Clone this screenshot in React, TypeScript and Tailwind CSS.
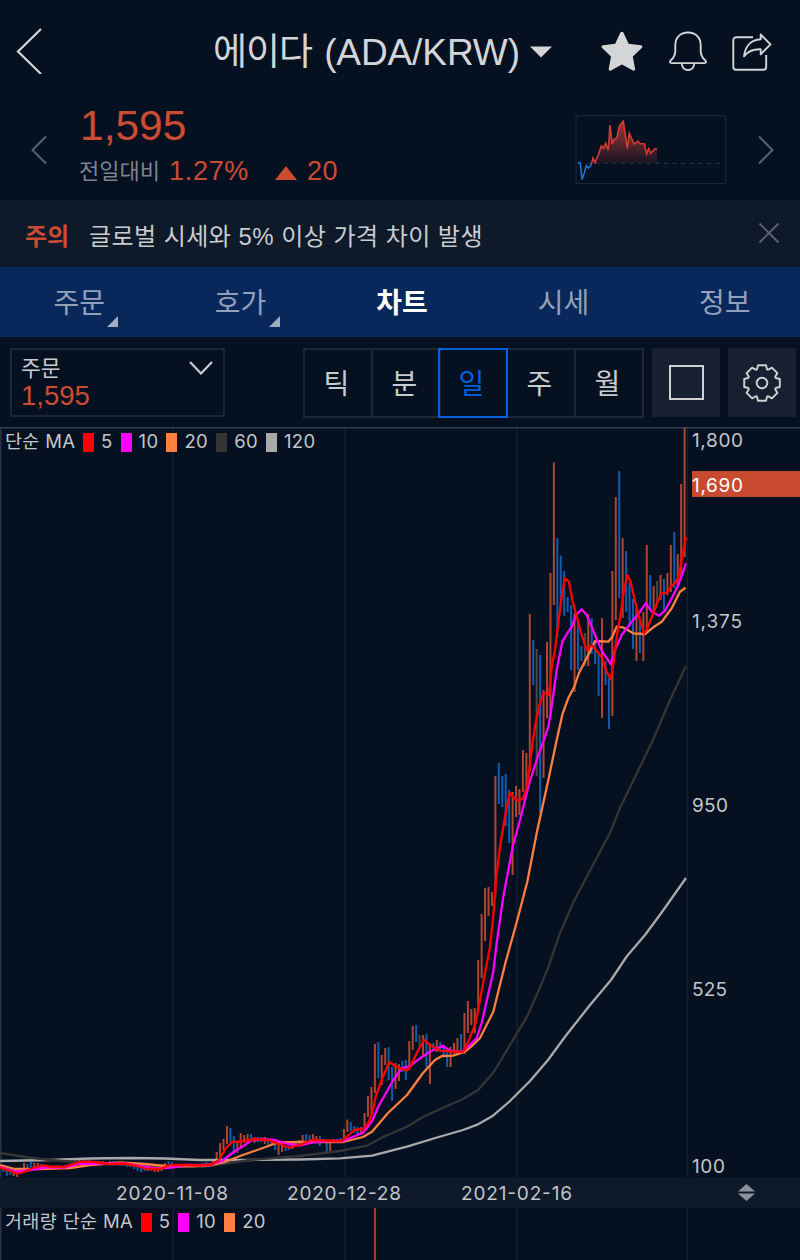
import { clsx } from 'clsx';

type Candle = [high: number, low: number, kind: 'u' | 'd' | 'n'];

const STEP = 3.44;

const candleColor = {
  u: '#b04630',
  d: '#125bb0',
  n: '#484a44',
} as const;

const candleRuns: { start: number; candles: Candle[] }[] = [
  {
    start: 3.4,
    candles: [
      [1165, 1172, 'd'], [1168, 1176, 'd'], [1171, 1175, 'd'], [1171, 1176, 'u'], [1171, 1177, 'u'],
      [1168, 1174, 'u'], [1163, 1170, 'u'], [1164, 1168, 'd'], [1162, 1167, 'd'], [1163, 1167, 'u'],
      [1163, 1168, 'u'], [1164, 1169, 'd'], [1165, 1169, 'd'], [1165, 1169, 'd'], [1166, 1169, 'u'],
      [1166, 1169, 'u'], [1165, 1169, 'd'], [1166, 1169, 'u'], [1165, 1169, 'u'], [1164, 1168, 'u'],
      [1161, 1167, 'u'], [1160, 1166, 'u'], [1159, 1164, 'u'], [1159, 1164, 'd'], [1160, 1163, 'd'],
      [1160, 1163, 'd'], [1161, 1164, 'u'], [1161, 1164, 'd'], [1161, 1164, 'u'], [1161, 1165, 'u'],
      [1162, 1165, 'd'], [1161, 1164, 'u'], [1161, 1164, 'd'], [1162, 1164, 'u'], [1162, 1165, 'd'],
      [1162, 1165, 'd'], [1163, 1167, 'd'], [1163, 1167, 'd'], [1165, 1169, 'd'], [1166, 1171, 'd'],
      [1167, 1172, 'd'], [1167, 1171, 'd'], [1168, 1171, 'u'], [1168, 1171, 'd'], [1168, 1172, 'u'],
      [1168, 1172, 'u'], [1168, 1171, 'u'], [1163, 1168, 'u'], [1161, 1167, 'd'], [1162, 1168, 'd'],
      [1164, 1167, 'd'], [1164, 1168, 'u'], [1164, 1166, 'u'], [1164, 1167, 'd'], [1164, 1166, 'u'],
      [1164, 1167, 'd'], [1164, 1167, 'u'], [1164, 1168, 'd'], [1163, 1168, 'u'], [1162, 1166, 'd'],
      [1163, 1166, 'u'],
    ],
  },
  {
    start: 213.2,
    candles: [
      [1159, 1163, 'u'], [1152, 1162, 'u'], [1143, 1160, 'u'], [1139, 1150, 'u'], [1126, 1144, 'u'],
      [1128, 1142, 'd'], [1136, 1154, 'd'], [1142, 1153, 'u'], [1133, 1147, 'u'], [1135, 1143, 'u'],
      [1134, 1142, 'u'], [1134, 1141, 'd'], [1137, 1143, 'u'], [1137, 1142, 'd'], [1137, 1142, 'd'],
      [1137, 1144, 'u'], [1139, 1145, 'd'], [1139, 1145, 'u'], [1140, 1150, 'd'], [1143, 1155, 'u'],
      [1146, 1152, 'u'], [1147, 1151, 'd'], [1146, 1150, 'd'], [1143, 1149, 'u'], [1142, 1147, 'd'],
      [1140, 1145, 'u'], [1135, 1145, 'u'], [1134, 1140, 'd'], [1135, 1140, 'd'], [1134, 1139, 'u'],
      [1136, 1140, 'u'], [1136, 1146, 'd'], [1139, 1143, 'u'], [1140, 1152, 'd'], [1141, 1151, 'u'],
      [1139, 1143, 'u'], [1139, 1143, 'd'], [1138, 1143, 'd'], [1129, 1142, 'u'], [1119.5, 1132, 'u'],
      [1122, 1131, 'd'], [1126, 1133, 'd'], [1127, 1134, 'd'], [1127, 1135, 'u'], [1113, 1127, 'u'],
      [1096, 1117, 'u'], [1087, 1114, 'u'], [1044, 1093, 'u'], [1042, 1078, 'd'], [1055, 1085, 'u'],
      [1048, 1065, 'u'], [1047, 1080, 'd'], [1067, 1101, 'd'], [1063, 1089, 'u'], [1064, 1081, 'u'],
      [1061, 1072, 'd'], [1060, 1080, 'd'], [1041, 1070, 'u'], [1026, 1050, 'u'], [1025, 1042, 'd'],
      [1035, 1047, 'n'], [1035, 1055, 'u'], [1034, 1068, 'd'], [1043, 1084, 'u'], [1043, 1051, 'd'],
      [1040, 1052, 'u'], [1042, 1052, 'd'], [1045, 1057, 'd'], [1050, 1067, 'd'], [1047, 1067, 'u'],
      [1043, 1054, 'u'], [1038, 1053, 'u'],
    ],
  },
  {
    start: 461,
    candles: [
      [1034, 1053, 'd'], [1013, 1054, 'u'], [1001, 1033, 'u'], [1009, 1025, 'u'], [1008, 1033, 'u'],
      [960, 1013, 'u'], [914, 978, 'u'], [888, 941, 'u'], [887, 916, 'u'], [892, 906, 'u'],
      [776, 897, 'u'], [763, 804, 'd'], [776, 807, 'd'], [774, 826, 'd'], [790, 843, 'd'],
      [792, 875, 'u'], [786, 817, 'u'], [789, 815, 'u'], [750, 792, 'u'], [753, 788, 'u'],
      [614, 772, 'u'], [640, 685, 'd'], [649, 776, 'n'], [655, 813, 'd'], [690, 778, 'u'],
      [642, 718, 'u'], [573, 713, 'u'], [462.5, 605, 'u'], [538, 638, 'd'], [555.5, 607, 'd'],
      [571, 616, 'd'], [597, 612, 'd'], [605, 670, 'd'], [613, 692, 'u'], [622.5, 670, 'd'],
      [646, 661, 'd'], [633, 666, 'n'], [614, 666, 'u'], [618, 654, 'd'], [640, 664, 'd'],
      [655, 696, 'd'], [618, 718, 'u'], [661, 685, 'd'], [678, 729, 'd'], [571, 716, 'u'],
      [497, 620, 'u'], [471, 598, 'd'], [538, 618, 'u'], [551, 612, 'd'], [583, 627, 'd'],
      [599, 649, 'd'], [608, 661, 'u'], [617, 653, 'd'], [612, 661, 'u'], [545, 633, 'u'],
      [575, 610, 'd'], [586, 612, 'u'], [581, 602, 'n'], [575, 600, 'u'], [579, 610, 'd'],
      [573, 595, 'u'], [545, 592, 'u'], [532, 588, 'd'], [554, 585, 'u'], [484, 577, 'u'],
      [428, 557, 'u'],
    ],
  },
];

const movingAverages = [
  {
    period: 120,
    color: '#a9a9a9',
    points:
      '0,1161 50,1160 90,1158.5 130,1158 165,1158.5 200,1160 250,1160 300,1159.5 340,1158.3 372,1155.7 407,1146.7 437,1137.5 463,1130 478,1124.3 493,1115.7 510,1101 530,1081 548,1060 565,1036.7 590,1005 611,980 627,956 645,935 662,912 686,878',
  },
  {
    period: 60,
    color: '#353535',
    points:
      '0,1153 25,1157 50,1160 75,1162 100,1164 150,1165.5 200,1167 215,1165 250,1160 300,1156 340,1151 367,1145.7 383,1137 407,1126.7 423,1117 443,1107.7 463,1099 478,1090 493,1073 501,1060 527,1016.7 538,992 548,968 560,933 573,903 592,866.7 610,833 620,808 653,740 670,700 686,666',
  },
  {
    period: 20,
    color: '#ff7f3f',
    points:
      '0,1165 15,1169 40,1169 70,1168 90,1165 120,1162.5 145,1164 170,1166.5 195,1166 212,1165 225,1162 240,1156 260,1149 278,1142.5 300,1142 343,1142 363,1137 372,1131.7 388,1113 407,1095 423,1073 435,1060 442,1056 453,1055.7 465,1051.7 473,1045 480,1038 493.3,1011.7 497,996.7 505.7,961.7 517.3,920 527.3,881.7 536.7,833 548.3,780 556.7,740 562.5,714 568.3,698 574.3,686.7 579,673 586.7,658 595,641 608.3,641.7 612.3,636.7 616.7,626.7 622.7,627.3 633.3,633.3 645,634 653.3,627.3 661.7,621.7 671.7,608.3 680,591.7 685.5,587.7',
  },
  {
    period: 10,
    color: '#ff00ff',
    points:
      '0,1167 10,1170 17,1171.5 30,1170 45,1167.5 65,1167.5 78,1164 95,1163.5 125,1163.5 140,1166 155,1168.5 172,1167.5 185,1165 210,1165 222,1161 235,1151 242,1147 252,1140 262,1139 275,1140 288,1144 300,1145.5 315,1142 330,1141 343,1141 363,1132.7 371.7,1121.7 378.3,1106.7 386.7,1091.7 393.3,1080 401.7,1068.3 410,1066 420,1058.3 430,1051.7 442.7,1045.7 450,1050.7 461.7,1052 470,1045 476.7,1038 481.7,1023 493.3,971.7 496.7,943 503.3,896.7 512.7,846.7 520,820 528.3,786.7 537.7,756.7 543.3,741.7 548.3,727 551.7,706.7 556.7,670 562.3,641.7 568.3,631.7 571.7,627 576,615 581.7,609.3 586.7,615 595,635 602.3,651.7 610.7,664 615,650 621.7,635 631.7,621.7 640,611.7 645.7,603.3 651.7,611.7 659,615.7 665,610.7 671.7,598.3 678.3,585 686,563.3',
  },
  {
    period: 5,
    color: '#ff0000',
    points:
      '0,1167.5 7,1170 17,1173.5 24,1172 34,1167.5 42,1165.5 50,1166.5 64,1167 73,1164 82,1161.5 95,1162 108,1164 125,1163.5 137,1166 147,1169 160,1169 170,1165 185,1165 200,1165.5 212,1164.5 219,1160 226,1148 232,1142 245,1141 255,1139 268,1140 276,1143 289,1147.5 300,1145 311,1140 325,1140.5 335,1141 342,1141 347,1136.7 354.3,1130 363.3,1128.7 368.3,1123 372.3,1113 375.7,1096.7 381.7,1080 389.3,1062 395,1066 400,1068 406.7,1070.7 410,1067 418.3,1050 424.3,1040 430,1045 440,1050.7 453.3,1051.7 463.3,1051.7 469,1040 475.7,1023 480,1000 484.3,976.7 490,946.7 493.3,916.7 496,880 500,846.7 505,816.7 509.7,793 514,798 519,800.7 523.3,798 527.3,785 533,740 535.7,723 539,706.7 543.3,693 549,695 551.7,666.7 555,650 558.3,623 561.7,596.7 565,578.3 569,581.7 572.3,600 577.7,620 581.7,635 586.7,650 591.7,645 596.7,650.7 602.3,658.3 606.7,671.7 610.7,679.3 614,660 616.7,636.7 620.7,613.3 624,590 627.3,575 630.7,581.7 634.3,598.3 640,620 644,633.3 647.3,628.3 653.3,613.3 658.3,600 661.7,593.3 666.7,592.7 671.7,586 676,581.7 679,575 682.3,556.7 686,537',
  },
];

const priceTicks = [
  { label: '1,800', y: 447, width: 51 },
  { label: '1,375', y: 627.5, width: 50 },
  { label: '950', y: 811.5, width: 36 },
  { label: '525', y: 996, width: 35 },
  { label: '100', y: 1173, width: 33 },
];

const dateTicks = [
  { label: '2020-11-08', x: 116, width: 112 },
  { label: '2020-12-28', x: 287, width: 114 },
  { label: '2021-02-16', x: 461, width: 111 },
];

const gridLines = [173, 345, 517, 687.5];

const tabs = [
  { label: '주문', corner: true },
  { label: '호가', corner: true },
  { label: '차트', active: true },
  { label: '시세' },
  { label: '정보' },
];

const intervals = ['틱', '분', '일', '주', '월'];

const priceLegend = [
  { period: '5', color: 'bg-[#ff0000]' },
  { period: '10', color: 'bg-[#ff00ff]' },
  { period: '20', color: 'bg-[#ff7f3f]' },
  { period: '60', color: 'bg-[#353535]' },
  { period: '120', color: 'bg-[#a9a9a9]' },
];

const sparkRed =
  '591.7,163 593,158 595,162.7 598.3,155 601.3,146 603.7,148.3 605.7,143.3 608.3,150 610,125 612.3,144 614.3,139 616.7,138.3 619,127.3 621.3,123.3 623.3,121.3 627.3,148.3 629.3,133.3 634,144 638,141.3 640,143.7 644.3,143.7 646.7,154 648.7,148.7 650.7,153.3 655,148.7 657,148.7';

function Header() {
  return (
    <header className="flex h-[100px] items-center text-[#d3d5d7]">
      <svg className="ml-4 h-12 w-7" viewBox="0 0 28 48" fill="none" stroke="currentColor" strokeWidth="2.2">
        <path d="M25 3 2 25.5 25 48" />
      </svg>
      <h1 className="ml-[169px] flex h-12 w-[309px] items-center whitespace-nowrap pt-[5px] text-[37px]">
        <span className="tracking-[-1px]">에이다</span>
        <span className="ml-[12px] tracking-[-0.1px]">(ADA/KRW)</span>
      </h1>
      <svg className="ml-[8px] mt-[3px] h-3 w-[22px]" viewBox="0 0 22 12" fill="currentColor">
        <path d="M0 .5h22L11 11.5z" />
      </svg>
      <svg className="ml-[49px] mt-[2px] h-10 w-[42px]" viewBox="0 0 42 40" fill="currentColor">
        <path d="M19.4 1.6c.6-1.300 2.400-1.300 3 0l5.200 11.200 12.300 1.500c1.500.2 2 1.700.9 2.700l-9 8.600 2.300 12.300c.3 1.400-1 2.200-2.200 1.500L20.900 33.400 9.900 39.400c-1.200.7-2.500-.1-2.200-1.500L10 25.600 1.100 17c-1.100-1-.5-2.500.9-2.700l12.200-1.500z" />
      </svg>
      <svg className="ml-[25px] mt-[2px] h-[42px] w-10" viewBox="668 30 40 42" fill="none" stroke="currentColor" strokeWidth="1.9" strokeLinejoin="round">
        <path d="M688 32.500c-8 0-12.700 5.300-12.700 12.700v5.300c0 4.200-1.200 7-4.600 10-1.400 1.300-.8 2.600.8 2.600h33c1.600 0 2.200-1.300.8-2.600-3.400-3-4.600-5.800-4.600-10v-5.300c0-7.400-4.700-12.700-12.700-12.700z" />
        <path d="M681.700 63.500c.5 4.200 3 6.500 6.300 6.500s5.800-2.300 6.300-6.500" />
      </svg>
      <svg className="ml-[23px] mt-[2px] h-[42px] w-[42px]" viewBox="731 30 42 42" fill="none" stroke="currentColor" strokeWidth="1.9" strokeLinejoin="round">
        <path d="M753 37.300h-17a2.700 2.700 0 0 0-2.700 2.700v27a2.700 2.700 0 0 0 2.700 2.700h27.500a2.700 2.700 0 0 0 2.700-2.700V55" />
        <path d="M760.700 34.500l9.800 9.800-9.800 10v-5c-7.500-.3-12.500 1.500-16.700 7 1.300-9.800 7-16.600 16.700-17z" />
      </svg>
    </header>
  );
}

function PriceSummary() {
  return (
    <section className="flex h-[100px] items-start">
      <svg className="ml-[31px] mt-[35px] h-[30px] w-4" viewBox="0 0 16 30" fill="none" stroke="#596271" strokeWidth="2">
        <path d="M15 1.5 1.5 15 15 28.5" />
      </svg>
      <div className="ml-[31px] mt-1 w-[497px] text-[#cc4c31]">
        <div className="pl-[2px] text-[42.5px] leading-[44px]">1,595</div>
        <div className="mt-[7px] flex h-8 items-center">
          <span className="w-[91px] whitespace-nowrap pl-px text-[22px] text-[#7c838e]">전일대비</span>
          <span className="text-[27px] tracking-[0.7px]">1.27%</span>
          <svg className="ml-[26px] mt-[3px] h-[14px] w-[22px]" viewBox="0 0 22 14" fill="currentColor">
            <path d="M11 0 22 14H0z" />
          </svg>
          <span className="ml-[10px] text-[27px] tracking-[0.5px]">20</span>
        </div>
      </div>
      <svg className="mt-[15px] h-[69px] w-[151px]" viewBox="575 115 151 69">
        <defs>
          <linearGradient id="spark-fill" x1="0" y1="0" x2="0" y2="1">
            <stop offset="0" stopColor="#a33733" />
            <stop offset="1" stopColor="#a33733" stopOpacity="0.12" />
          </linearGradient>
        </defs>
        <rect x="576" y="115.7" width="149.5" height="67.8" fill="none" stroke="#1b2736" strokeWidth="1.2" />
        <path d="M578 163.3H721" stroke="#253140" strokeWidth="1.3" strokeDasharray="4 4.6" />
        <polygon points={`${sparkRed} 657,163`} fill="url(#spark-fill)" />
        <polyline points="577.7,163 580.3,163 582,179.5 584.3,173 586.3,165.7 588.7,168 590.7,165.7 591.7,163" fill="none" stroke="#1d74cc" strokeWidth="1.6" />
        <polyline points={sparkRed} fill="none" stroke="#d23a32" strokeWidth="1.6" />
      </svg>
      <svg className="ml-8 mt-[35px] h-[30px] w-4" viewBox="0 0 16 30" fill="none" stroke="#596271" strokeWidth="2">
        <path d="M1 1.5 14.5 15 1 28.5" />
      </svg>
    </section>
  );
}

function Notice() {
  return (
    <section className="flex h-[67px] items-center bg-[#0e192a] pb-[2px] text-[24px]">
      <strong className="ml-[25px] w-[64px] pt-[8px] font-bold text-[#cc4c31]">주의</strong>
      <p className="whitespace-nowrap pt-[8px] tracking-[0.46px] text-[#c9ccce]">글로벌 시세와 5% 이상 가격 차이 발생</p>
      <svg className="ml-auto mr-[20px] h-[22px] w-[22px]" viewBox="0 0 22 22" fill="none" stroke="#5c6471" strokeWidth="1.8">
        <path d="m1.5 1.5 19 19M20.5 1.5l-19 19" />
      </svg>
    </section>
  );
}

function Tabs() {
  return (
    <nav className="h-[70px] overflow-hidden bg-[#08275b]">
      <div className="-ml-[2px] grid h-full w-[807px] grid-cols-5">
        {tabs.map((tab) => (
          <div key={tab.label} className="relative flex items-center justify-center pl-px pt-[4px]">
            <span
              className={clsx(
                'text-[28px]',
                tab.active ? 'font-bold text-white' : 'text-[#93a0ba]',
              )}
            >
              {tab.label}
            </span>
            {tab.corner && (
              <svg className="absolute bottom-[10px] right-[41px] h-[11px] w-[11px]" viewBox="0 0 11 11" fill="#a3aec2">
                <path d="M11 0v11H0z" />
              </svg>
            )}
          </div>
        ))}
      </div>
    </nav>
  );
}

function Toolbar() {
  return (
    <section className="flex h-[90px] items-start pl-[10px] pt-[11px] text-[#c9ccce]">
      <div className="flex h-[69px] w-[215px] justify-between border-2 border-[#1c2635] pl-[9px]">
        <div>
          <div className="mt-[6px] text-[21.5px] leading-[26px]">주문</div>
          <div className="text-[27.5px] leading-[27px]">
            <span className="text-[#cc4c31]">1,595</span>
          </div>
        </div>
        <svg className="mr-[10px] mt-[11px] h-[14px] w-6" viewBox="0 0 24 14" fill="none" stroke="currentColor" strokeWidth="2.2">
          <path d="m1 1 11 11.5L23 1" />
        </svg>
      </div>
      <div className="ml-[78px] flex h-[70px] w-[341px] border-2 border-[#1c2635]">
        {intervals.map((name) => (
          <button
            key={name}
            className={clsx(
              'flex flex-1 items-center justify-center pr-[3px] pt-[4px] text-[28px]',
              name === '일'
                ? 'z-10 -my-[2px] -ml-[3px] border-2 border-[#0260dc] text-[#0260dc]'
                : 'border-r-2 border-[#1c2635] last:border-r-0',
            )}
          >
            {name}
          </button>
        ))}
      </div>
      <div className="ml-2 flex h-[69px] w-[68px] items-center justify-center bg-[#162030]">
        <div className="h-[35px] w-[35px] border-2 border-[#cfd1d3]" />
      </div>
      <div className="ml-2 flex h-[69px] w-[68px] items-center justify-center bg-[#162030]">
        <svg className="h-[38px] w-[38px]" viewBox="-19 -19 38 38" fill="none" stroke="#cfd1d3" strokeWidth="1.9" strokeLinejoin="round">
          <path d="M-5-13.700-4-17.800H4L5-13.700 6.200-13.200 9.900-15.400 15.400-9.900 13.200-6.200 13.700-5 17.800-4V4L13.700 5 13.200 6.200 15.400 9.900 9.900 15.400 6.200 13.200 5 13.700 4 17.800H-4L-5 13.700-6.200 13.200-9.900 15.400-15.400 9.900-13.200 6.200-13.700 5-17.800 4V-4L-13.700-5-13.200-6.200-15.400-9.900-9.900-15.400-6.200-13.200z" />
          <circle r="5.300" />
        </svg>
      </div>
    </section>
  );
}

function Legend({ title, items }: { title: string; items: typeof priceLegend }) {
  return (
    <div className="flex h-[26px] items-center whitespace-nowrap pl-[5px] font-['Inter','Noto_Sans_CJK_KR',sans-serif] text-[18.5px] tracking-[0.35px] text-[#c3c6c9]">
      <span className="mr-[7.5px]">{title}</span>
      {items.map((item) => (
        <span key={item.period} className="mr-2 flex items-center">
          <i className={clsx('mr-[7px] h-[19px] w-[11px]', item.color)} />
          {item.period}
        </span>
      ))}
    </div>
  );
}

function PriceChart() {
  return (
    <section className="relative h-[781px]">
      <svg
        className="block h-[781px] w-[800px] font-['Inter','Noto_Sans_CJK_KR',sans-serif]"
        viewBox="0 427 800 781"
        fontSize="19"
      >
        {gridLines.map((x) => (
          <path key={x} d={`M${x} 428V1177`} stroke="#152030" strokeWidth="1.5" />
        ))}
        <path d="M0 427H800" stroke="#344050" strokeWidth="3" />
        <path d="M.8 427V1177" stroke="#2a3544" strokeWidth="1.5" />
        {candleRuns.map((run) =>
          run.candles.map(([high, low, kind], i) => {
            const x = run.start + i * STEP;
            return (
              <line key={x} x1={x} x2={x} y1={high} y2={low} stroke={candleColor[kind]} strokeWidth="2" />
            );
          }),
        )}
        {movingAverages.map((ma) => (
          <polyline key={ma.period} points={ma.points} fill="none" stroke={ma.color} strokeWidth="2.3" strokeLinejoin="round" />
        ))}
        <rect y="1177.5" width="800" height="30.5" fill="#0e192a" />
        {priceTicks.map((tick) => (
          <text key={tick.label} x="692" y={tick.y} textLength={tick.width} fill="#c3c6c9">
            {tick.label}
          </text>
        ))}
        <rect x="692" y="471" width="108" height="26" fill="#c84a2f" />
        <text x="692" y="492" textLength="51" fill="#fff">
          1,690
        </text>
        {dateTicks.map((tick) => (
          <text key={tick.label} x={tick.x} y="1200" textLength={tick.width} fill="#c3c6c9">
            {tick.label}
          </text>
        ))}
        <path d="m746.5 1184 8.5 7.5h-17zM746.5 1201l8.5-7.500h-17z" fill="#8a919c" />
      </svg>
      <div className="absolute left-0 top-[2px]">
        <Legend title="단순 MA" items={priceLegend} />
      </div>
    </section>
  );
}

function VolumeChart() {
  return (
    <section className="relative h-[52px]">
      <svg className="block h-[52px] w-[800px]" viewBox="0 0 800 52">
        {gridLines.map((x) => (
          <path key={x} d={`M${x} 0V52`} stroke="#152030" strokeWidth="1.5" />
        ))}
        <path d="M.8 0V52" stroke="#2a3544" strokeWidth="1.5" />
        <path d="M375 0V52" stroke="#b04630" strokeWidth="1.8" />
      </svg>
      <div className="absolute left-0 top-px">
        <Legend title="거래량 단순 MA" items={priceLegend.slice(0, 3)} />
      </div>
    </section>
  );
}

export default function App() {
  return (
    <main className="h-[1260px] w-[800px] overflow-hidden bg-[#051120] font-['Liberation_Sans','Noto_Sans_CJK_KR',sans-serif]">
      <Header />
      <PriceSummary />
      <Notice />
      <Tabs />
      <Toolbar />
      <PriceChart />
      <VolumeChart />
    </main>
  );
}
